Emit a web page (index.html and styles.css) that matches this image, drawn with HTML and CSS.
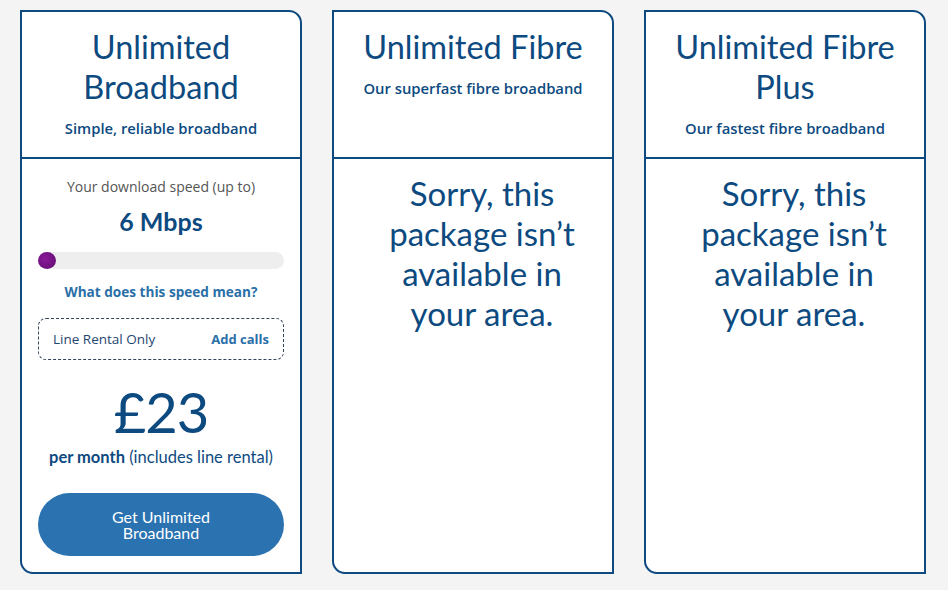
FILE: index.html
```html
<!DOCTYPE html>
<html>
<head>
<meta charset="utf-8">
<link rel="stylesheet" href="styles.css">
</head>
<body>
<div class="plans">
  <div class="card">
    <div class="head">
      <h2 class="title">Unlimited Broadband</h2>
      <p class="sub">Simple, reliable broadband</p>
    </div>
    <div class="body">
      <p class="speed-label">Your download speed (up to)</p>
      <p class="speed">6 Mbps</p>
      <div class="bar"><div class="fill"></div></div>
      <a class="speed-link">What does this speed mean?</a>
      <div class="calls">
        <span>Line Rental Only</span>
        <a class="add">Add calls</a>
      </div>
      <p class="price">£23</p>
      <p class="per"><b>per month</b> (includes line rental)</p>
      <button class="cta"><span class="cta-line">Get Unlimited</span><span class="cta-line">Broadband</span></button>
    </div>
  </div>
  <div class="card">
    <div class="head">
      <h2 class="title">Unlimited Fibre</h2>
      <p class="sub">Our superfast fibre broadband</p>
    </div>
    <div class="body">
      <p class="sorry">Sorry, this package isn’t available in your area.</p>
    </div>
  </div>
  <div class="card">
    <div class="head">
      <h2 class="title">Unlimited Fibre Plus</h2>
      <p class="sub">Our fastest fibre broadband</p>
    </div>
    <div class="body">
      <p class="sorry">Sorry, this package isn’t available in your area.</p>
    </div>
  </div>
</div>
</body>
</html>
```

FILE: styles.css
```css
* { box-sizing: border-box; }
html, body { margin: 0; background: #f4f4f4; }
body {
  font-family: "Open Sans", "Noto Sans", sans-serif;
  color: #0d4a80;
}
.plans {
  display: flex;
  gap: 30px;
  padding: 10px 0 0 20px;
}
.card {
  width: 282px;
  height: 564px;
  background: #fff;
  border: 2px solid #0d4a80;
  border-radius: 0 13px 0 13px;
  display: flex;
  flex-direction: column;
}
.head {
  height: 147px;
  border-bottom: 2px solid #0d4a80;
  text-align: center;
  padding: 15px 6px 0;
}
.title {
  margin: 0;
  font-family: "Lato", sans-serif;
  font-weight: 400;
  font-size: 32.5px;
  line-height: 40px;
  color: #0d4a80;
  padding: 0 4px;
}
.sub {
  margin: 11px 0 0;
  font-family: "Open Sans", sans-serif;
  font-weight: 600;
  font-size: 14.8px;
  line-height: 20px;
}
.body {
  flex: 1;
  padding: 0 16px;
  display: flex;
  flex-direction: column;
  align-items: center;
  text-align: center;
}
.speed-label {
  margin: 18px 0 0;
  font-size: 14px;
  line-height: 20px;
  color: #555;
}
.speed {
  margin: 9px 0 0;
  font-family: "Lato", sans-serif;
  font-weight: 700;
  font-size: 25px;
  line-height: 30px;
}
.bar {
  margin-top: 16px;
  width: 246px;
  height: 17px;
  background: #eeeeee;
  border-radius: 9px;
}
.fill {
  width: 18px;
  height: 17px;
  border-radius: 50%;
  background: radial-gradient(circle at 40% 40%, #8a1a9a, #5e0a6e);
}
.speed-link {
  margin-top: 13px;
  font-size: 13.6px;
  line-height: 20px;
  font-weight: 700;
  color: #2a6fa8;
}
.calls {
  margin-top: 16px;
  width: 246px;
  height: 42px;
  border: 1px dashed #33445a;
  border-radius: 8px;
  display: flex;
  align-items: center;
  justify-content: space-between;
  padding: 0 14px 0 14px;
  font-size: 13.5px;
  color: #1f4670;
}
.add {
  font-weight: 700;
  font-size: 13px;
  color: #2a6fa8;
}
.price {
  margin: 21px 0 0;
  font-family: "Lato", sans-serif;
  font-size: 56px;
  line-height: 62px;
  font-weight: 400;
  letter-spacing: -1px;
}
.per {
  margin: 4px 0 0;
  font-family: "Lato", sans-serif;
  font-size: 16.5px;
  line-height: 20px;
}
.per b { font-weight: 700; }
.cta {
  margin-top: 26px;
  width: 246px;
  height: 63px;
  border: 0;
  border-radius: 32px;
  background: #2a72b0;
  color: #fff;
  font-family: "Lato", sans-serif;
  font-size: 16px;
  line-height: 16px;
  padding: 0;
  display: flex;
  flex-direction: column;
  align-items: center;
  justify-content: center;
}
.cta-line { display: block; }
.sorry {
  margin: 14px 0 0;
  padding: 0 12px 0 30px;
  font-family: "Lato", sans-serif;
  font-size: 33px;
  line-height: 40px;
}
```
